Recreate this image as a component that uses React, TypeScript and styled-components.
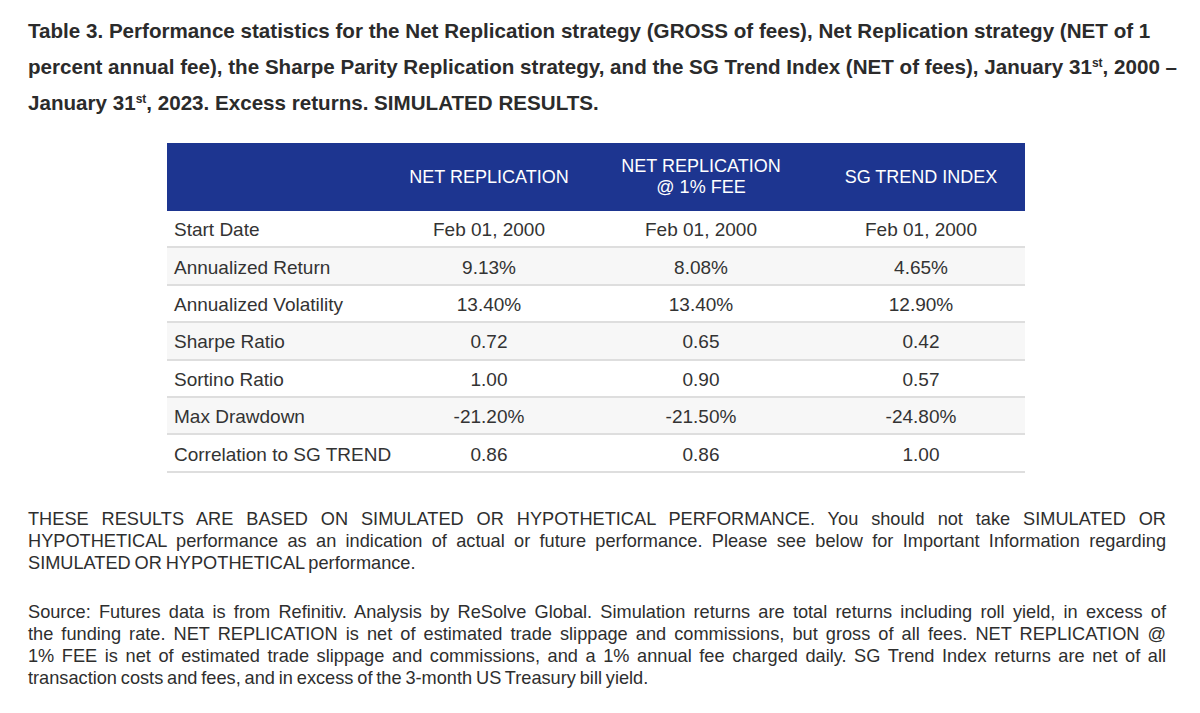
import React from "react";
import styled, { createGlobalStyle } from "styled-components";

const Global = createGlobalStyle`
  html, body { margin: 0; padding: 0; background: #ffffff; }
  body { font-family: "Liberation Sans", Arial, Helvetica, sans-serif; color: #333; }
`;

const Page = styled.div`
  padding: 13px 34px 0 28px;
  width: 1200px;
  box-sizing: border-box;
`;

const Title = styled.h1`
  margin: 0;
  font-size: 20.6px;
  line-height: 36px;
  font-weight: 700;
  color: #2b2b2b;
  sup {
    font-size: 12px;
    line-height: 0;
    vertical-align: 7px;
  }
`;

const TitleLine = styled.span`
  display: block;
  white-space: nowrap;
`;

const TableWrap = styled.div`
  display: flex;
  margin: 22px 0 0 139px;
`;

const Table = styled.table`
  border-collapse: collapse;
  table-layout: fixed;
  width: 858px;
  font-size: 19px;
  line-height: 20px;
  color: #333;
`;

const HeadCell = styled.th`
  background: #1d3590;
  color: #fff;
  font-weight: 400;
  font-size: 18px;
  line-height: 21px;
  height: 68px;
  padding: 0;
  text-align: center;
  vertical-align: middle;
`;

const Row = styled.tr<{ $shade: boolean }>`
  background: ${(p) => (p.$shade ? "#f7f7f7" : "#ffffff")};
  border-bottom: 2px solid #dedede;
`;

const LabelCell = styled.td`
  height: 32.4px;
  padding: 3px 0 0 7px;
  text-align: left;
  white-space: nowrap;
`;

const ValueCell = styled.td`
  padding: 3px 0 0 0;
  text-align: center;
`;

const Para = styled.p<{ $top: number }>`
  margin: ${(p) => p.$top}px 0 0 0;
  font-size: 18.2px;
  line-height: 22px;
  color: #2e2e2e;
  word-spacing: -1.2px;
`;

const Line = styled.span<{ $last?: boolean }>`
  display: block;
  white-space: nowrap;
  text-align: justify;
  text-align-last: ${(p) => (p.$last ? "left" : "justify")};
`;

const cols = [226, 192, 232, 208];

const rows: [string, string, string, string][] = [
  ["Start Date", "Feb 01, 2000", "Feb 01, 2000", "Feb 01, 2000"],
  ["Annualized Return", "9.13%", "8.08%", "4.65%"],
  ["Annualized Volatility", "13.40%", "13.40%", "12.90%"],
  ["Sharpe Ratio", "0.72", "0.65", "0.42"],
  ["Sortino Ratio", "1.00", "0.90", "0.57"],
  ["Max Drawdown", "-21.20%", "-21.50%", "-24.80%"],
  ["Correlation to SG TREND", "0.86", "0.86", "1.00"],
];

const para1 = [
  "THESE RESULTS ARE BASED ON SIMULATED OR HYPOTHETICAL PERFORMANCE. You should not take SIMULATED OR",
  "HYPOTHETICAL performance as an indication of actual or future performance. Please see below for Important Information regarding",
  "SIMULATED OR HYPOTHETICAL performance.",
];

const para2 = [
  "Source: Futures data is from Refinitiv. Analysis by ReSolve Global. Simulation returns are total returns including roll yield, in excess of",
  "the funding rate. NET REPLICATION is net of estimated trade slippage and commissions, but gross of all fees. NET REPLICATION @",
  "1% FEE is net of estimated trade slippage and commissions, and a 1% annual fee charged daily. SG Trend Index returns are net of all",
  "transaction costs and fees, and in excess of the 3-month US Treasury bill yield.",
];

export default function App() {
  return (
    <>
      <Global />
      <Page>
        <Title>
          <TitleLine>
            Table 3. Performance statistics for the Net Replication strategy (GROSS of fees), Net
            Replication strategy (NET of 1
          </TitleLine>
          <TitleLine>
            percent annual fee), the Sharpe Parity Replication strategy, and the SG Trend Index (NET
            of fees), January 31<sup>st</sup>, 2000 –
          </TitleLine>
          <TitleLine>
            January 31<sup>st</sup>, 2023. Excess returns. SIMULATED RESULTS.
          </TitleLine>
        </Title>
        <TableWrap>
          <Table>
            <colgroup>
              {cols.map((w, i) => (
                <col key={i} style={{ width: w }} />
              ))}
            </colgroup>
            <thead>
              <tr>
                <HeadCell />
                <HeadCell>NET REPLICATION</HeadCell>
                <HeadCell>
                  NET REPLICATION
                  <br />@ 1% FEE
                </HeadCell>
                <HeadCell>SG TREND INDEX</HeadCell>
              </tr>
            </thead>
            <tbody>
              {rows.map((r, i) => (
                <Row key={r[0]} $shade={i % 2 === 1}>
                  <LabelCell>{r[0]}</LabelCell>
                  <ValueCell>{r[1]}</ValueCell>
                  <ValueCell>{r[2]}</ValueCell>
                  <ValueCell>{r[3]}</ValueCell>
                </Row>
              ))}
            </tbody>
          </Table>
        </TableWrap>
        <Para $top={35}>
          {para1.map((l, i) => (
            <Line key={i} $last={i === para1.length - 1}>
              {l}
            </Line>
          ))}
        </Para>
        <Para $top={27}>
          {para2.map((l, i) => (
            <Line key={i} $last={i === para2.length - 1}>
              {l}
            </Line>
          ))}
        </Para>
      </Page>
    </>
  );
}
